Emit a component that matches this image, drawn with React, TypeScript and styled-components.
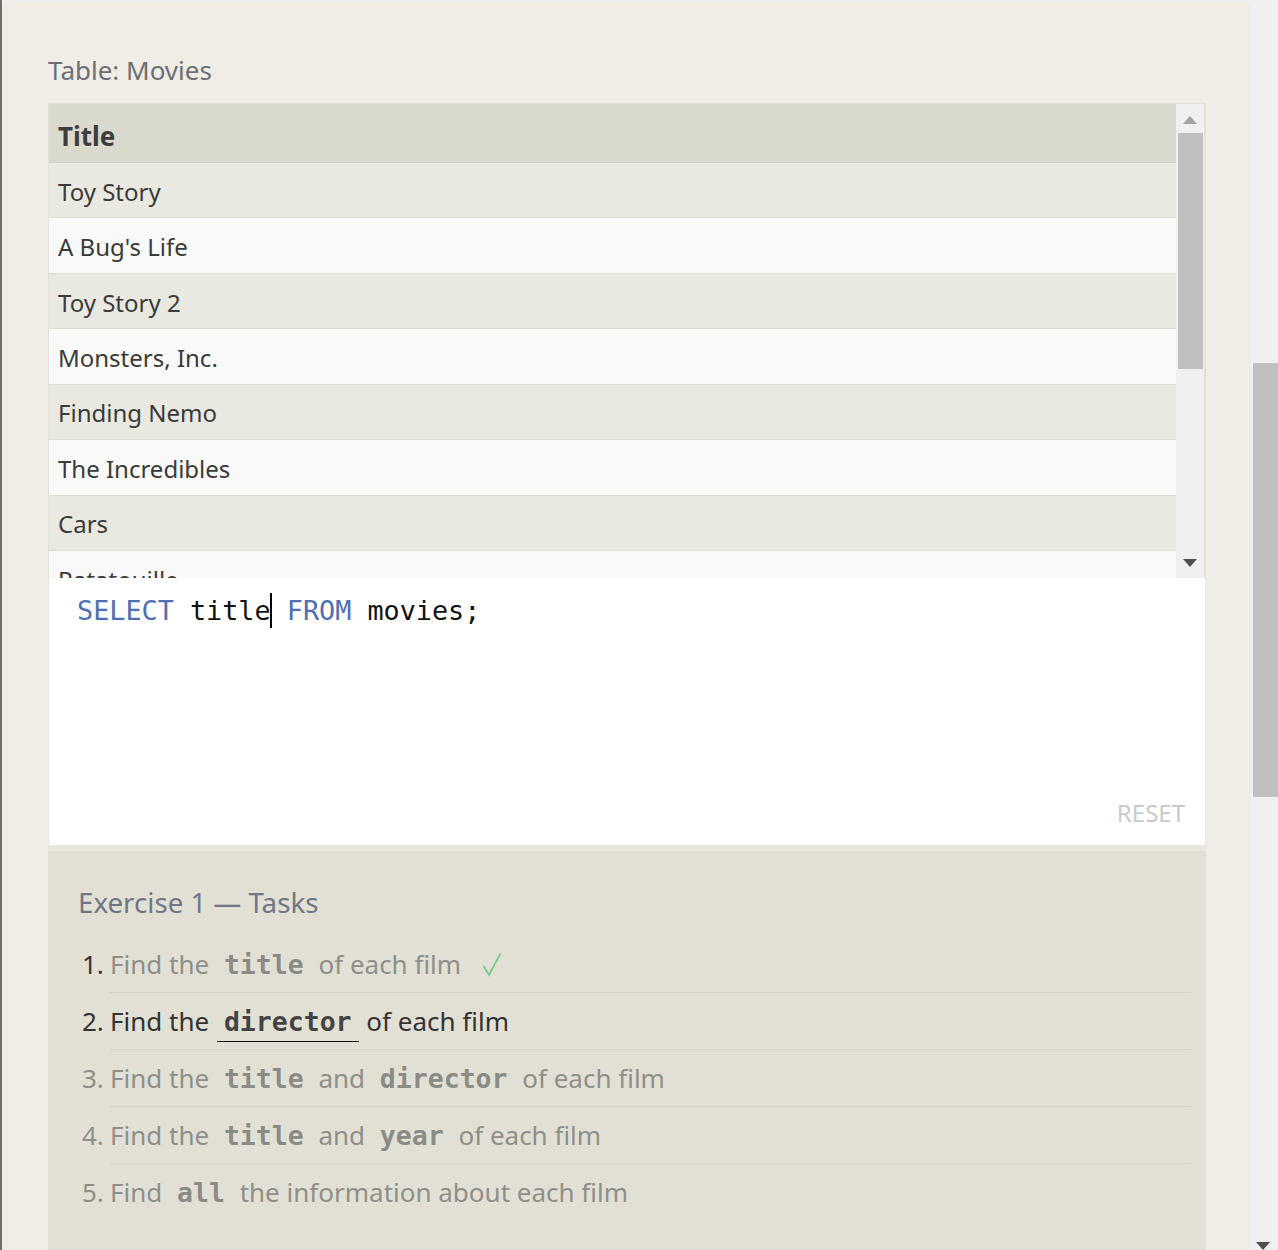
import React from "react";
import styled, { createGlobalStyle } from "styled-components";

const Global = createGlobalStyle`
  html, body { margin: 0; padding: 0; background: #f0f0f0; overflow: hidden; }
  body { font-family: "Noto Sans", "Open Sans", sans-serif; }
  * { box-sizing: border-box; }
`;

const SANS = `"Noto Sans", "Open Sans", sans-serif`;
const MONO = `"DejaVu Sans Mono", "Liberation Mono", monospace`;

const Page = styled.div`
  display: flex;
  height: 1250px;
  width: 1278px;
  overflow: hidden;
  background: #f0f0f0;
`;

const LeftEdge = styled.div`
  width: 2px;
  flex: none;
  background: #6e6e6e;
`;

const Panel = styled.main`
  flex: 1;
  margin-top: 2px;
  background: #f0ede6;
  border-top-left-radius: 5px;
  border-top-right-radius: 5px;
  padding: 46px 45px 0 46px;
  display: flex;
  flex-direction: column;
  min-width: 0;
`;

const PageScroll = styled.div`
  width: 27px;
  flex: none;
  display: flex;
  flex-direction: column;
  align-items: flex-end;
  background: #f0f0f0;
`;

const Spacer = styled.div<{ $h: number }>`
  height: ${(p) => p.$h}px;
  flex: none;
`;

const PageThumb = styled.div`
  width: 25px;
  height: 434px;
  background: #c0c0c0;
  flex: none;
`;

const Grow = styled.div`
  flex: 1;
`;

const Caption = styled.h2`
  margin: 0 0 11px 0;
  font-family: ${SANS};
  font-weight: 400;
  font-size: 26px;
  line-height: 44px;
  color: #6c6f73;
`;

const TableBox = styled.div`
  height: 475px;
  flex: none;
  display: flex;
  border: 1px solid #e2e0d8;
  border-bottom: none;
  background: #f9f9f9;
`;

const Rows = styled.div`
  flex: 1;
  overflow: hidden;
  min-width: 0;
`;

const HeadCell = styled.div`
  height: 59px;
  padding: 5px 0 0 9px;
  display: flex;
  align-items: center;
  background: #dad9ce;
  border-bottom: 1px solid #d4d3c9;
  font-family: ${SANS};
  font-weight: 700;
  font-size: 26px;
  color: #3d3d3d;
`;

const Cell = styled.div<{ $odd: boolean }>`
  height: 55.43px;
  padding: 2px 0 0 9px;
  display: flex;
  align-items: center;
  background: ${(p) => (p.$odd ? "#eae9e1" : "#f9f9f9")};
  border-bottom: 1px solid #dedcd4;
  font-family: ${SANS};
  font-size: 24px;
  color: #3a3a3a;
  white-space: nowrap;
`;

const Scroll = styled.div`
  width: 29px;
  flex: none;
  background: #f0f0f0;
  display: flex;
  flex-direction: column;
  align-items: center;
  border-right: 1px solid #e2e0d8;
`;

const Thumb = styled.div`
  width: 25px;
  height: 236px;
  background: #c0c0c0;
  flex: none;
`;

const Arrow = ({ up, color }: { up?: boolean; color: string }) => (
  <svg width="14" height="8" viewBox="0 0 14 8" style={{ flex: "none" }}>
    {up ? (
      <polygon points="7,0 14,8 0,8" fill={color} />
    ) : (
      <polygon points="0,0 14,0 7,8" fill={color} />
    )}
  </svg>
);

const Editor = styled.div`
  height: 267px;
  flex: none;
  background: #ffffff;
  display: flex;
  flex-direction: column;
  justify-content: space-between;
  padding: 15px 20px 16px 28px;
  border-left: 1px solid #ebe9e2;
  border-right: 1px solid #ebe9e2;
`;

const CodeLine = styled.div`
  font-family: ${MONO};
  font-size: 26.8px;
  line-height: 36px;
  color: #111;
  white-space: pre;
`;

const Kw = styled.span`
  color: #4d6fb3;
`;

const Caret = styled.span`
  display: inline-block;
  width: 2px;
  height: 35px;
  background: #000;
  vertical-align: middle;
  margin: -4px -1px 0 -1px;
`;

const Reset = styled.button`
  align-self: flex-end;
  border: none;
  background: none;
  padding: 0;
  font-family: ${SANS};
  font-size: 24px;
  line-height: 32px;
  color: #c9c9c9;
`;

const Tasks = styled.section`
  flex: 1;
  background: #e2e0d5;
  border-top: 6px solid #e8e6dd;
  padding: 33px 15px 0 30px;
`;

const TasksTitle = styled.h3`
  margin: 0 0 16px 0;
  font-family: ${SANS};
  font-weight: 400;
  font-size: 27.7px;
  line-height: 36px;
  color: #6f7685;
`;

const List = styled.ol`
  list-style: none;
  margin: 0;
  padding: 0 0 0 32px;
`;

type Tone = "done" | "active" | "todo";

const Item = styled.li<{ $tone: Tone; $last?: boolean }>`
  height: 57px;
  padding: 10px 0;
  line-height: 36px;
  border-bottom: ${(p) => (p.$last ? "none" : "1px solid #d7d5cb")};
  font-family: ${SANS};
  font-size: 26px;
  color: ${(p) => (p.$tone === "active" ? "#333333" : "#8f8f89")};
  white-space: nowrap;
`;

const Num = styled.span<{ $dark: boolean }>`
  display: inline-block;
  width: 28px;
  margin-left: -28px;
  color: ${(p) => (p.$dark ? "#333333" : "#8f8f89")};
`;

const Code = styled.code<{ $active?: boolean }>`
  font-family: ${MONO};
  font-weight: 700;
  font-size: 26.5px;
  line-height: 1;
  padding: 0 7px 4px 7px;
  margin: 0 1px;
  color: ${(p) => (p.$active ? "#444444" : "#8b8b85")};
  border-bottom: ${(p) => (p.$active ? "1px solid #111" : "none")};
`;

const Check = styled.svg`
  margin-left: 21px;
  vertical-align: -3px;
`;

const movies = [
  "Toy Story",
  "A Bug's Life",
  "Toy Story 2",
  "Monsters, Inc.",
  "Finding Nemo",
  "The Incredibles",
  "Cars",
  "Ratatouille",
];

export default function App() {
  return (
    <>
      <Global />
      <Page>
        <LeftEdge />
        <Panel>
          <Caption>Table: Movies</Caption>
          <TableBox>
            <Rows>
              <HeadCell>Title</HeadCell>
              {movies.map((m, i) => (
                <Cell key={m} $odd={i % 2 === 0}>
                  {m}
                </Cell>
              ))}
            </Rows>
            <Scroll>
              <Spacer $h={12} />
              <Arrow up color="#a3a3a3" />
              <Spacer $h={9} />
              <Thumb />
              <Grow />
              <Arrow color="#505050" />
              <Spacer $h={11} />
            </Scroll>
          </TableBox>
          <Editor>
            <CodeLine>
              <Kw>SELECT</Kw> title<Caret /> <Kw>FROM</Kw> movies;
            </CodeLine>
            <Reset>RESET</Reset>
          </Editor>
          <Tasks>
            <TasksTitle>Exercise 1 — Tasks</TasksTitle>
            <List>
              <Item $tone="done">
                <Num $dark>1.</Num>Find the <Code>title</Code> of each film
                <Check width="20" height="25" viewBox="0 0 20 25">
                  <polyline
                    points="1.5,14 7,23 18.5,1.5"
                    fill="none"
                    stroke="#7cc98b"
                    strokeWidth="1.8"
                    strokeLinejoin="miter"
                  />
                </Check>
              </Item>
              <Item $tone="active">
                <Num $dark>2.</Num>Find the <Code $active>director</Code> of each film
              </Item>
              <Item $tone="todo">
                <Num $dark={false}>3.</Num>Find the <Code>title</Code> and{" "}
                <Code>director</Code> of each film
              </Item>
              <Item $tone="todo">
                <Num $dark={false}>4.</Num>Find the <Code>title</Code> and{" "}
                <Code>year</Code> of each film
              </Item>
              <Item $tone="todo" $last>
                <Num $dark={false}>5.</Num>Find <Code>all</Code> the information about
                each film
              </Item>
            </List>
          </Tasks>
        </Panel>
        <PageScroll>
          <Spacer $h={363} />
          <PageThumb />
          <Grow />
          <svg width="14" height="8" viewBox="0 0 14 8" style={{ marginRight: 8 }}>
            <polygon points="0,0 14,0 7,8" fill="#505050" />
          </svg>
        </PageScroll>
      </Page>
    </>
  );
}
